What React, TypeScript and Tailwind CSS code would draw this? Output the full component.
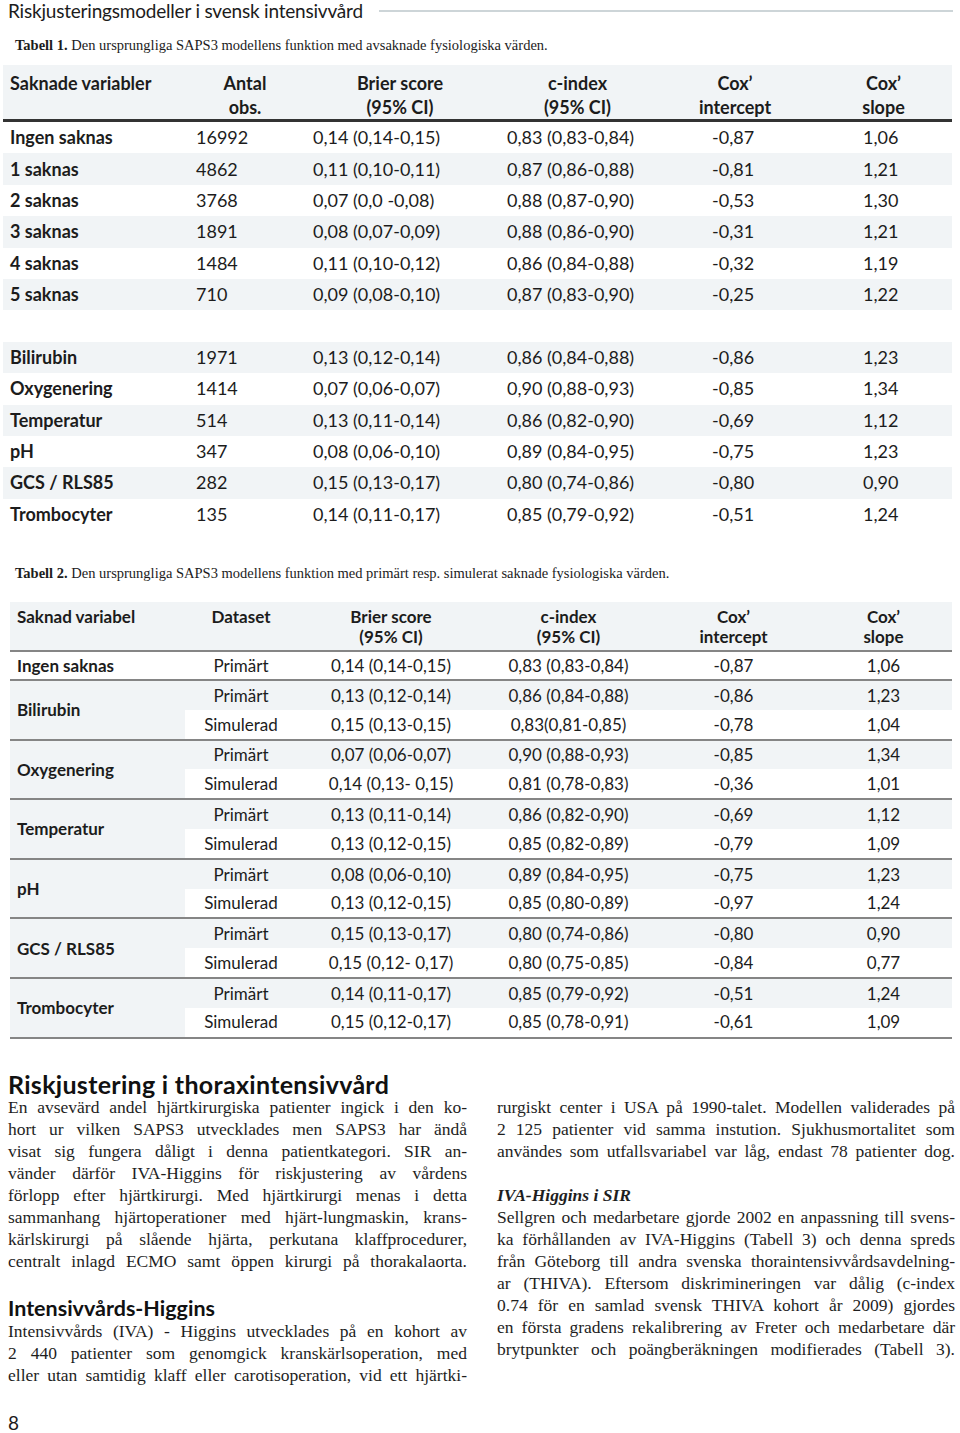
import React from 'react';

const sans = { fontFamily: 'Lato, "Open Sans", sans-serif' };
const serif = { fontFamily: '"Liberation Serif", "Times New Roman", serif' };

type Row1 = [string, string, string, string, string, string] | null;

const table1: Row1[] = [
  ['Ingen saknas', '16992', '0,14 (0,14-0,15)', '0,83 (0,83-0,84)', '-0,87', '1,06'],
  ['1 saknas', '4862', '0,11 (0,10-0,11)', '0,87 (0,86-0,88)', '-0,81', '1,21'],
  ['2 saknas', '3768', '0,07 (0,0 -0,08)', '0,88 (0,87-0,90)', '-0,53', '1,30'],
  ['3 saknas', '1891', '0,08 (0,07-0,09)', '0,88 (0,86-0,90)', '-0,31', '1,21'],
  ['4 saknas', '1484', '0,11 (0,10-0,12)', '0,86 (0,84-0,88)', '-0,32', '1,19'],
  ['5 saknas', '710', '0,09 (0,08-0,10)', '0,87 (0,83-0,90)', '-0,25', '1,22'],
  null,
  ['Bilirubin', '1971', '0,13 (0,12-0,14)', '0,86 (0,84-0,88)', '-0,86', '1,23'],
  ['Oxygenering', '1414', '0,07 (0,06-0,07)', '0,90 (0,88-0,93)', '-0,85', '1,34'],
  ['Temperatur', '514', '0,13 (0,11-0,14)', '0,86 (0,82-0,90)', '-0,69', '1,12'],
  ['pH', '347', '0,08 (0,06-0,10)', '0,89 (0,84-0,95)', '-0,75', '1,23'],
  ['GCS / RLS85', '282', '0,15 (0,13-0,17)', '0,80 (0,74-0,86)', '-0,80', '0,90'],
  ['Trombocyter', '135', '0,14 (0,11-0,17)', '0,85 (0,79-0,92)', '-0,51', '1,24'],
];

type Vals = [string, string, string, string];

interface Group {
  name: string;
  primart: Vals;
  simulerad: Vals;
}

const groups: Group[] = [
  { name: 'Bilirubin', primart: ['0,13 (0,12-0,14)', '0,86 (0,84-0,88)', '-0,86', '1,23'], simulerad: ['0,15 (0,13-0,15)', '0,83(0,81-0,85)', '-0,78', '1,04'] },
  { name: 'Oxygenering', primart: ['0,07 (0,06-0,07)', '0,90 (0,88-0,93)', '-0,85', '1,34'], simulerad: ['0,14 (0,13- 0,15)', '0,81 (0,78-0,83)', '-0,36', '1,01'] },
  { name: 'Temperatur', primart: ['0,13 (0,11-0,14)', '0,86 (0,82-0,90)', '-0,69', '1,12'], simulerad: ['0,13 (0,12-0,15)', '0,85 (0,82-0,89)', '-0,79', '1,09'] },
  { name: 'pH', primart: ['0,08 (0,06-0,10)', '0,89 (0,84-0,95)', '-0,75', '1,23'], simulerad: ['0,13 (0,12-0,15)', '0,85 (0,80-0,89)', '-0,97', '1,24'] },
  { name: 'GCS / RLS85', primart: ['0,15 (0,13-0,17)', '0,80 (0,74-0,86)', '-0,80', '0,90'], simulerad: ['0,15 (0,12- 0,17)', '0,80 (0,75-0,85)', '-0,84', '0,77'] },
  { name: 'Trombocyter', primart: ['0,14 (0,11-0,17)', '0,85 (0,79-0,92)', '-0,51', '1,24'], simulerad: ['0,15 (0,12-0,17)', '0,85 (0,78-0,91)', '-0,61', '1,09'] },
];

const leftPara1 = [
  'En avsevärd andel hjärtkirurgiska patienter ingick i den ko-',
  'hort ur vilken SAPS3 utvecklades men SAPS3 har ändå',
  'visat sig fungera dåligt i denna patientkategori. SIR an-',
  'vänder därför IVA-Higgins för riskjustering av vårdens',
  'förlopp efter hjärtkirurgi. Med hjärtkirurgi menas i detta',
  'sammanhang hjärtoperationer med hjärt-lungmaskin, krans-',
  'kärlskirurgi på slående hjärta, perkutana klaffprocedurer,',
  'centralt inlagd ECMO samt öppen kirurgi på thorakalaorta.',
];

const leftPara2 = [
  'Intensivvårds (IVA) - Higgins utvecklades på en kohort av',
  '2 440 patienter som genomgick kranskärlsoperation, med',
  'eller utan samtidig klaff eller carotisoperation, vid ett hjärtki-',
];

const rightPara1 = [
  'rurgiskt center i USA på 1990-talet. Modellen validerades på',
  '2 125 patienter vid samma instution. Sjukhusmortalitet som',
  'användes som utfallsvariabel var låg, endast 78 patienter dog.',
];

const rightPara2 = [
  'Sellgren och medarbetare gjorde 2002 en anpassning till svens-',
  'ka förhållanden av IVA-Higgins (Tabell 3) och denna spreds',
  'från Göteborg till andra svenska thoraintensivvårdsavdelning-',
  'ar (THIVA). Eftersom diskrimineringen var dålig (c-index',
  '0.74 för en samlad svensk THIVA kohort år 2009) gjordes',
  'en första gradens rekalibrering av Freter och medarbetare där',
  'brytpunkter och poängberäkningen modifierades (Tabell 3).',
];

const Lines = ({ lines }: { lines: string[] }) => (
  <div>
    {lines.map((l, i) => (
      <div key={i} className="whitespace-nowrap text-justify [text-align-last:justify] leading-[22px]">
        {l}
      </div>
    ))}
  </div>
);

const t1Cols = 'grid grid-cols-[187px_110px_200px_155px_160px_137px]';
const t2Cols = 'grid grid-cols-[175px_112px_188px_167px_163px_137px]';

const App = () => {
  return (
    <div className="w-[960px] h-[1433px] bg-white text-[#1c1c1c] overflow-hidden">
      {/* Running head */}
      <div className="flex items-center pl-[8px] pr-[7px] pt-[0px] h-[21px]">
        <span className="text-[19px] leading-[21px] tracking-[-0.2px] whitespace-nowrap" style={sans}>
          Riskjusteringsmodeller i svensk intensivvård
        </span>
        <div className="flex-1 ml-[16px] h-[2px] bg-[#cdd5d8]" />
      </div>

      {/* Tabell 1 */}
      <div className="pl-[15px] mt-[15px] text-[14.5px] leading-[18px]" style={serif}>
        <b>Tabell 1.</b> Den ursprungliga SAPS3 modellens funktion med avsaknade fysiologiska värden.
      </div>

      <div className="ml-[3px] w-[949px] mt-[11px] text-[18px]" style={sans}>
        <div className={`${t1Cols} bg-[#f1f4f6] h-[54px] pt-[6px] font-bold leading-[24px]`}>
          <div className="pl-[7px]">Saknade variabler</div>
          <div className="text-center">Antal<br />obs.</div>
          <div className="text-center">Brier score<br />(95% CI)</div>
          <div className="text-center">c-index<br />(95% CI)</div>
          <div className="text-center">Cox’<br />intercept</div>
          <div className="text-center">Cox’<br />slope</div>
        </div>
        <div className="h-[3px] bg-[#333]" />
        {table1.map((r, i) => (
          <div key={i} className={`${t1Cols} h-[31.4px] items-center ${i % 2 === 1 ? 'bg-[#f1f4f6]' : 'bg-white'}`}>
            {r && (
              <>
                <div className="pl-[7px] font-bold">{r[0]}</div>
                <div className="pl-[6px]">{r[1]}</div>
                <div className="pl-[13px]">{r[2]}</div>
                <div className="pl-[7px]">{r[3]}</div>
                <div className="pl-[57px]">{r[4]}</div>
                <div className="pl-[48px]">{r[5]}</div>
              </>
            )}
          </div>
        ))}
      </div>

      {/* Tabell 2 */}
      <div className="pl-[15px] mt-[34px] text-[14.5px] leading-[18px]" style={serif}>
        <b>Tabell 2.</b> Den ursprungliga SAPS3 modellens funktion med primärt resp. simulerat saknade fysiologiska värden.
      </div>

      <div className="ml-[10px] w-[942px] mt-[20px] text-[17px]" style={sans}>
        <div className={`${t2Cols} bg-[#f1f4f6] h-[48px] pt-[5px] font-bold leading-[20px]`}>
          <div className="pl-[7px]">Saknad variabel</div>
          <div className="text-center">Dataset</div>
          <div className="text-center">Brier score<br />(95% CI)</div>
          <div className="text-center">c-index<br />(95% CI)</div>
          <div className="text-center">Cox’<br />intercept</div>
          <div className="text-center">Cox’<br />slope</div>
        </div>
        <div className="h-[2px] bg-[#858585]" />
        <div className={`${t2Cols} h-[27px] items-center`}>
          <div className="pl-[7px] font-bold">Ingen saknas</div>
          <div className="text-center">Primärt</div>
          <div className="text-center">0,14 (0,14-0,15)</div>
          <div className="text-center">0,83 (0,83-0,84)</div>
          <div className="text-center">-0,87</div>
          <div className="text-center">1,06</div>
        </div>
        <div className="h-[2px] bg-[#858585]" />
        {groups.map((g) => (
          <div key={g.name}>
            <div className={`${t2Cols} grid-rows-[28.8px_28.8px]`}>
              <div className="row-span-2 bg-[#f1f4f6] flex items-center pl-[7px] font-bold">{g.name}</div>
              <div className="bg-[#f1f4f6] flex items-center justify-center">Primärt</div>
              {g.primart.map((v, i) => (
                <div key={i} className="bg-[#f1f4f6] flex items-center justify-center whitespace-nowrap">{v}</div>
              ))}
              <div className="flex items-center justify-center">Simulerad</div>
              {g.simulerad.map((v, i) => (
                <div key={i} className="flex items-center justify-center whitespace-nowrap">{v}</div>
              ))}
            </div>
            <div className="h-[2px] bg-[#858585]" />
          </div>
        ))}
      </div>

      {/* Brödtext */}
      <div className="grid grid-cols-[459px_458px] gap-x-[30px] pl-[8px] mt-[33px] text-[17.5px] text-[#1e1e1e]" style={serif}>
        <div>
          <h2 className="text-[25px] leading-[24px] tracking-[0.3px] font-bold text-[#111]" style={sans}>
            Riskjustering i thoraxintensivvård
          </h2>
          <Lines lines={leftPara1} />
          <h2 className="mt-[24px] text-[21.5px] leading-[24px] font-bold text-[#111]" style={sans}>
            Intensivvårds-Higgins
          </h2>
          <Lines lines={leftPara2} />
        </div>
        <div className="pt-[24px]">
          <Lines lines={rightPara1} />
          <div className="mt-[22px] font-bold italic leading-[22px]">IVA-Higgins i SIR</div>
          <Lines lines={rightPara2} />
        </div>
      </div>

      <div className="pl-[8px] mt-[26px] text-[19px] leading-[22px]" style={sans}>8</div>
    </div>
  );
};

export default App;
